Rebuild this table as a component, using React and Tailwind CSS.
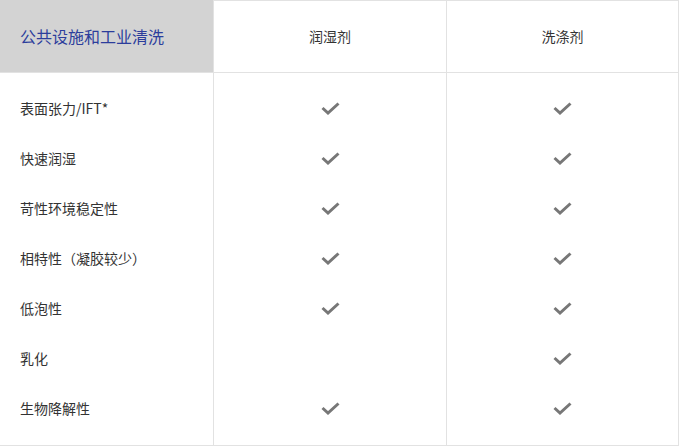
import React from "react";

const rows = [
  { label: "表面张力/IFT*", a: true, b: true },
  { label: "快速润湿", a: true, b: true },
  { label: "苛性环境稳定性", a: true, b: true },
  { label: "相特性（凝胶较少）", a: true, b: true },
  { label: "低泡性", a: true, b: true },
  { label: "乳化", a: false, b: true },
  { label: "生物降解性", a: true, b: true },
];

const Check = () => (
  <svg width="19" height="13" viewBox="0 0 19 13" fill="none">
    <polyline points="1.5,6 7,11 17.5,1.5" stroke="#777777" strokeWidth="3" />
  </svg>
);

export default function App() {
  return (
    <div className="w-[680px] h-[447px] bg-white text-[#333] font-['Noto_Sans_CJK_SC','Noto_Sans',sans-serif]">
      <div className="w-[679px] border-b border-[#e2e2e2]">
        {/* Header */}
        <div className="flex h-[73px] border-b border-[#e2e2e2]">
          <div className="w-[213px] bg-[#d3d3d3] flex items-center pl-5 text-[16px] text-[#2c3d9c]">
            公共设施和工业清洗
          </div>
          <div className="w-[233px] border-l border-t border-[#e2e2e2] flex items-center justify-center text-[14px]">
            润湿剂
          </div>
          <div className="w-[233px] border-l border-t border-r border-[#e2e2e2] flex items-center justify-center text-[14px]">
            洗涤剂
          </div>
        </div>

        {/* Body */}
        <div className="flex">
          <div className="w-[213px] pt-[10px] pb-[12px]">
            {rows.map((r) => (
              <div key={r.label} className="h-[50px] flex items-center pl-5 text-[14px]">
                {r.label}
              </div>
            ))}
          </div>
          <div className="w-[233px] border-l border-[#e2e2e2] pt-[10px] pb-[12px]">
            {rows.map((r) => (
              <div key={r.label} className="h-[50px] flex items-center justify-center">
                {r.a && <Check />}
              </div>
            ))}
          </div>
          <div className="w-[233px] border-l border-r border-[#e2e2e2] pt-[10px] pb-[12px]">
            {rows.map((r) => (
              <div key={r.label} className="h-[50px] flex items-center justify-center">
                {r.b && <Check />}
              </div>
            ))}
          </div>
        </div>
      </div>
    </div>
  );
}
